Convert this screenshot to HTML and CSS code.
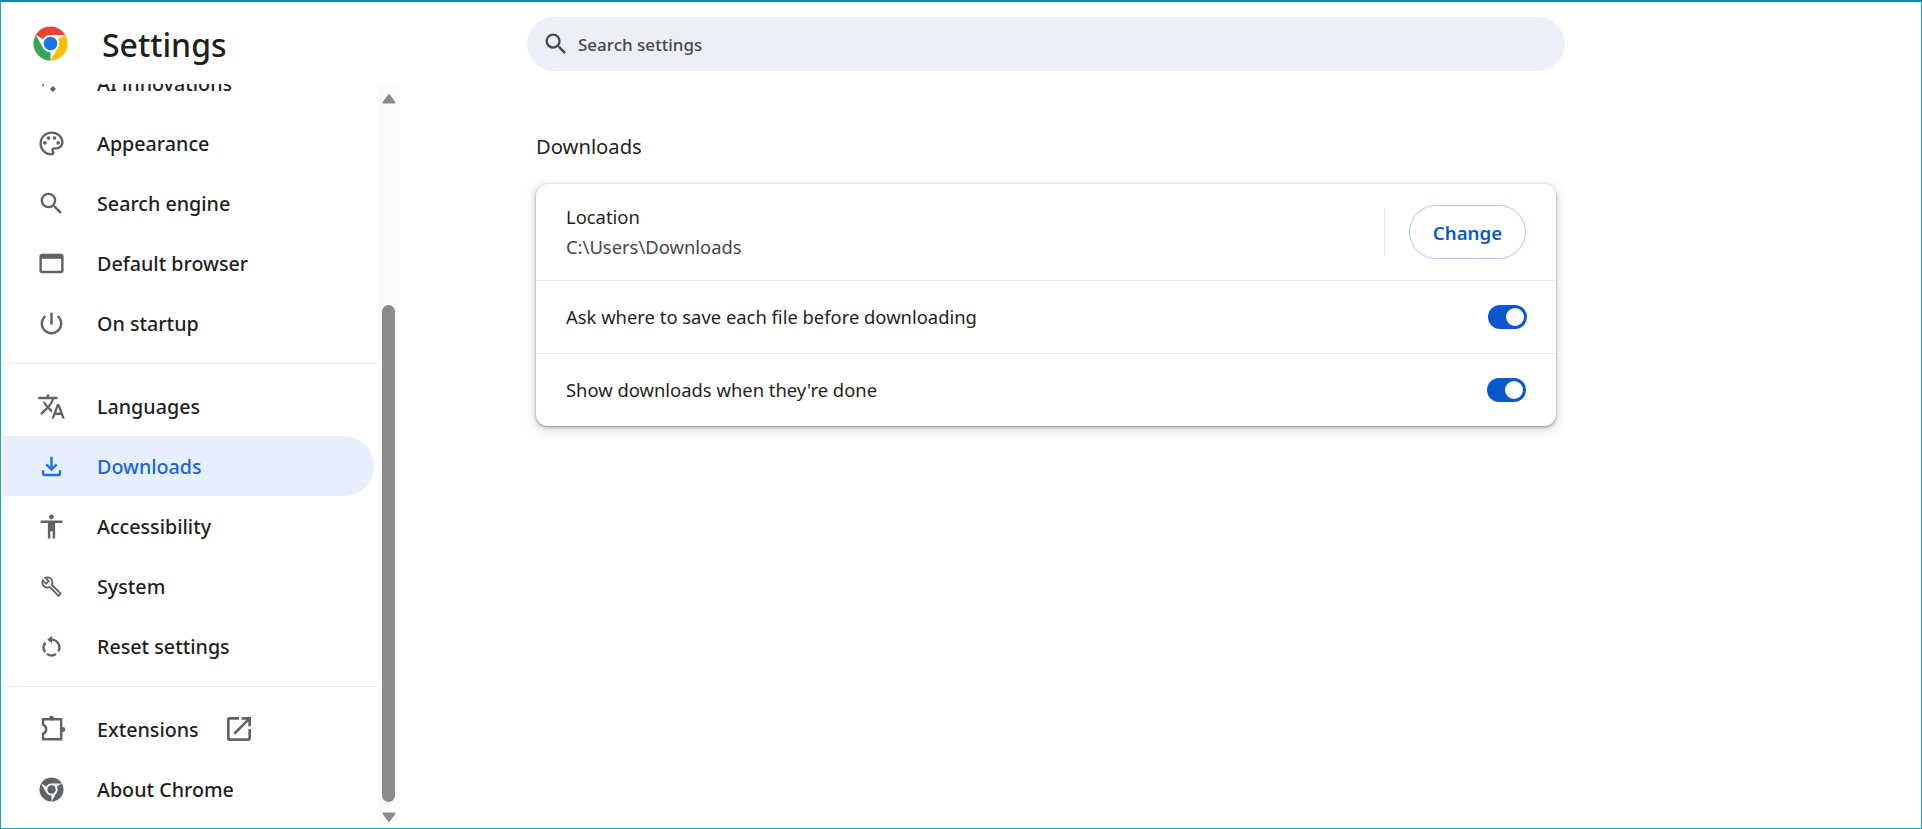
FILE: index.html
```html
<!DOCTYPE html>
<html lang="en">
<head>
<meta charset="UTF-8">
<meta name="viewport" content="width=device-width, initial-scale=1.0">
<title>Settings - Downloads</title>
<link rel="stylesheet" href="styles.css">
</head>
<body>
<div class="window">
  <aside class="sidebar">
    <div class="brand">
      <svg class="logo" viewBox="0 0 48 48">
        <path fill="#ea4335" d="M6.68 14A20 20 0 0 1 41.32 14H24A10 10 0 0 0 15.34 19Z"/>
        <path fill="#fbbc04" d="M41.32 14A20 20 0 0 1 24 44L32.66 29A10 10 0 0 0 32.66 19Z"/>
        <path fill="#34a853" d="M24 44A20 20 0 0 1 6.68 14L15.34 29A10 10 0 0 0 24 34Z"/>
        <circle fill="#fff" cx="24" cy="24" r="10"/>
        <circle fill="#1a73e8" cx="24" cy="24" r="8"/>
      </svg>
      <h1 class="brand-title">Settings</h1>
    </div>
    <div class="nav-area">
      <nav class="nav">
        <div class="nav-clip">
          <a class="nav-item">
            <svg class="icon" viewBox="0 0 24 24"><path d="M5 15.5L3.5 10H6.5ZM13.2 14L15.7 16.5L13.2 19L10.7 16.5Z"/></svg>
            AI innovations
          </a>
          <a class="nav-item">
            <svg class="icon" viewBox="0 0 24 24"><path d="M12 22C6.49 22 2 17.51 2 12S6.49 2 12 2s10 4.04 10 9c0 3.31-2.69 6-6 6h-1.77c-.28 0-.5.22-.5.5 0 .12.05.23.13.33.41.47.64 1.06.64 1.67 0 1.38-1.12 2.5-2.5 2.5zm0-18c-4.41 0-8 3.59-8 8s3.59 8 8 8c.28 0 .5-.22.5-.5 0-.16-.08-.28-.14-.35-.41-.46-.63-1.05-.63-1.65 0-1.38 1.12-2.5 2.5-2.5H16c2.21 0 4-1.79 4-4 0-3.86-3.59-7-8-7z"/><circle cx="6.5" cy="11.5" r="1.5"/><circle cx="9.5" cy="7.5" r="1.5"/><circle cx="14.5" cy="7.5" r="1.5"/><circle cx="17.5" cy="11.5" r="1.5"/></svg>
            Appearance
          </a>
          <a class="nav-item">
            <svg class="icon" viewBox="0 0 24 24"><path d="M15.5 14h-.79l-.28-.27A6.471 6.471 0 0 0 16 9.5 6.5 6.5 0 1 0 9.5 16c1.61 0 3.09-.59 4.23-1.57l.27.28v.79l5 4.99L20.49 19l-4.99-5zm-6 0C7.01 14 5 11.99 5 9.5S7.01 5 9.5 5 14 7.01 14 9.5 11.99 14 9.5 14z"/></svg>
            Search engine
          </a>
          <a class="nav-item">
            <svg class="icon" viewBox="0 0 24 24"><path d="M20 4H4c-1.1 0-2 .9-2 2v12c0 1.1.9 2 2 2h16c1.1 0 2-.9 2-2V6c0-1.1-.9-2-2-2zm0 14H4V8h16v10z"/></svg>
            Default browser
          </a>
          <a class="nav-item">
            <svg class="icon" viewBox="0 0 24 24"><path d="M13 3h-2v10h2V3zm4.83 2.17l-1.42 1.42C17.99 7.86 19 9.81 19 12c0 3.87-3.13 7-7 7s-7-3.13-7-7c0-2.19 1.01-4.14 2.58-5.42L6.17 5.17C4.23 6.82 3 9.26 3 12c0 4.97 4.03 9 9 9s9-4.03 9-9c0-2.74-1.23-5.18-3.17-6.83z"/></svg>
            On startup
          </a>
          <div class="nav-sep"></div>
          <a class="nav-item">
            <svg class="icon" viewBox="0 0 24 24"><path d="M12.87 15.07l-2.54-2.51.03-.03c1.74-1.94 2.98-4.17 3.71-6.53H17V4h-7V2H8v2H1v1.99h11.17C11.5 7.92 10.44 9.75 9 11.35 8.07 10.32 7.3 9.19 6.69 8h-2c.73 1.63 1.73 3.17 2.98 4.56l-5.09 5.02L4 19l5-5 3.11 3.11.76-2.04zM18.5 10h-2L12 22h2l1.12-3h4.75L21 22h2l-4.5-12zm-2.62 7l1.62-4.33L19.12 17h-3.24z"/></svg>
            Languages
          </a>
          <a class="nav-item active">
            <svg class="icon" viewBox="0 0 24 24"><path d="M12 16l-5-5 1.4-1.45L11 12.15V4h2v8.15l2.6-2.6L17 11l-5 5zm-6 4c-.55 0-1.02-.2-1.41-.59S4 18.55 4 18v-3h2v3h12v-3h2v3c0 .55-.2 1.02-.59 1.41S18.55 20 18 20H6z"/></svg>
            Downloads
          </a>
          <a class="nav-item">
            <svg class="icon" viewBox="0 0 24 24"><path d="M12 2c1.1 0 2 .9 2 2s-.9 2-2 2-2-.9-2-2 .9-2 2-2zm9 7h-6v13h-2v-6h-2v6H9V9H3V7h18v2z"/></svg>
            Accessibility
          </a>
          <a class="nav-item">
            <svg class="icon" viewBox="0 0 29 29"><g transform="translate(3.5 3.5) scale(.92)"><path d="M22.61 18.99l-9.08-9.08c.93-2.34.45-5.1-1.44-7C9.79.61 6.21.4 3.66 2.26L7.5 6.11 6.08 7.52 2.25 3.69C.39 6.23.6 9.82 2.9 12.11c1.86 1.86 4.57 2.35 6.89 1.48l9.11 9.11c.39.39 1.02.39 1.41 0l2.3-2.3c.4-.38.4-1.01 0-1.41zm-3 1.6l-9.46-9.46c-.61.45-1.29.72-2 .82-1.36.2-2.79-.21-3.83-1.25C3.37 9.76 2.93 8.5 3 7.26l3.09 3.09 4.24-4.24-3.09-3.09c1.24-.07 2.49.37 3.44 1.31 1.08 1.08 1.49 2.57 1.24 3.96-.12.71-.42 1.37-.88 1.96l9.45 9.45-.88.88z"/></g></svg>
            System
          </a>
          <a class="nav-item">
            <svg class="icon" viewBox="0 0 24 24"><path class="line" d="M12 6.3A6.5 6.5 0 0 1 17.63 16.05M15.73 18.12A6.5 6.5 0 0 1 8.27 18.12M6.68 16.53A6.5 6.5 0 0 1 7.02 8.62"/><path d="M8.5 6.3L12.5 3V9.6Z"/></svg>
            Reset settings
          </a>
          <div class="nav-sep"></div>
          <a class="nav-item">
            <svg class="icon" viewBox="0 0 24 24"><path class="line" d="M5 3.5H20V20H5V15.5A4 4 0 0 0 5 8Z"/><circle cx="12" cy="2.6" r="2"/><circle cx="21.4" cy="12" r="2"/></svg>
            Extensions
            <svg class="icon ext-link" viewBox="0 0 24 24"><path d="M19 19H5V5h7V3H5a2 2 0 0 0-2 2v14a2 2 0 0 0 2 2h14c1.1 0 2-.9 2-2v-7h-2v7zM14 3v2h3.59l-9.83 9.83 1.41 1.41L19 6.41V10h2V3h-7z"/></svg>
          </a>
          <a class="nav-item">
            <svg class="icon" viewBox="0 0 48 48"><path d="M6.68 14A20 20 0 0 1 41.32 14H24A10 10 0 0 0 15.34 19Z"/><path d="M41.32 14A20 20 0 0 1 24 44L32.66 29A10 10 0 0 0 32.66 19Z"/><path d="M24 44A20 20 0 0 1 6.68 14L15.34 29A10 10 0 0 0 24 34Z"/><circle cx="24" cy="24" r="7"/></svg>
            About Chrome
          </a>
        </div>
      </nav>
      <div class="scrollbar">
        <svg class="arrow" viewBox="0 0 14 11"><path d="M7 2L12.5 9.5H1.5Z"/></svg>
        <div class="thumb"></div>
        <svg class="arrow arrow-down" viewBox="0 0 14 11"><path d="M7 9L1.5 1.5H12.5Z"/></svg>
      </div>
    </div>
  </aside>

  <main class="main">
    <div class="search">
      <svg class="search-icon" viewBox="0 0 24 24"><path d="M15.5 14h-.79l-.28-.27A6.471 6.471 0 0 0 16 9.5 6.5 6.5 0 1 0 9.5 16c1.61 0 3.09-.59 4.23-1.57l.27.28v.79l5 4.99L20.49 19l-4.99-5zm-6 0C7.01 14 5 11.99 5 9.5S7.01 5 9.5 5 14 7.01 14 9.5 11.99 14 9.5 14z"/></svg>
      <span class="search-text">Search settings</span>
    </div>
    <h2 class="section-title">Downloads</h2>
    <section class="card">
      <div class="row row-location">
        <div class="location-text">
          <div class="row-label">Location</div>
          <div class="row-sub">C:\Users\Downloads</div>
        </div>
        <div class="vsep"></div>
        <button class="change-btn">Change</button>
      </div>
      <div class="row row-first">
        <div class="row-label">Ask where to save each file before downloading</div>
        <span class="toggle"></span>
      </div>
      <div class="row">
        <div class="row-label">Show downloads when they're done</div>
        <span class="toggle"></span>
      </div>
    </section>
  </main>
</div>
</body>
</html>
```

FILE: styles.css
```css
* {
  box-sizing: border-box;
}
body {
  margin: 0;
  background: #fff;
  color: #1f1f1f;
  font-family: "Noto Sans", "Open Sans", sans-serif;
}
.window {
  display: flex;
  height: 829px;
  overflow: hidden;
  border: 1px solid #1ba5b5;
  border-top: 2px solid #0e8a9c;
}

/* sidebar */
.sidebar {
  width: 399px;
  flex-shrink: 0;
  display: flex;
  flex-direction: column;
}
.brand {
  display: flex;
  align-items: center;
  height: 82px;
  padding: 0 0 0 29px;
}
.logo {
  width: 41px;
  height: 41px;
}
.brand-title {
  margin: 2px 0 0 31px;
  font-size: 32px;
  font-weight: 500;
  color: #1f1f1f;
}
.nav-area {
  flex: 1;
  display: flex;
  min-height: 0;
}
.nav {
  width: 376px;
  overflow: hidden;
}
.nav-clip {
  margin-top: -31px;
}
.nav-item {
  display: flex;
  align-items: center;
  height: 60px;
  width: 373px;
  padding-left: 36px;
  font-size: 19.7px;
  font-weight: 500;
  color: #1f1f1f;
  border-radius: 0 30px 30px 0;
}
.nav-item.active {
  margin-left: 2px;
  width: 371px;
  padding-left: 34px;
  background: #e7effc;
  color: #1a66d9;
}
.icon {
  width: 29px;
  height: 29px;
  margin-right: 31px;
  fill: #5f6368;
  flex-shrink: 0;
}
.nav-item.active .icon {
  fill: #1a73e8;
}
.ext-link {
  margin: 0 0 0 24px;
  width: 32px;
  height: 32px;
}
.line {
  fill: none;
  stroke: #5f6368;
  stroke-width: 2;
}
.nav-sep {
  height: 1px;
  margin: 10px 0 12px;
  background: #e8eaed;
}
.scrollbar {
  width: 23px;
  margin-top: 2px;
  background: #fbfbfb;
  display: flex;
  flex-direction: column;
  align-items: center;
}
.arrow {
  width: 14px;
  height: 11px;
  margin-top: 7px;
  flex-shrink: 0;
  fill: #8b8b8b;
  stroke: #8b8b8b;
  stroke-width: 2;
  stroke-linejoin: round;
}
.arrow-down {
  margin-top: 10px;
}
.thumb {
  width: 13px;
  height: 497px;
  margin-top: 201px;
  flex-shrink: 0;
  background: #8b8b8b;
  border-radius: 7px;
}

/* main */
.main {
  flex: 1;
  padding: 15px 0 0 127px;
}
.search {
  display: flex;
  align-items: center;
  width: 1038px;
  height: 54px;
  padding-left: 15px;
  background: #eceff7;
  border-radius: 27px;
}
.search-icon {
  width: 28px;
  height: 28px;
  fill: #474747;
}
.search-text {
  margin-left: 8px;
  font-size: 17px;
  font-weight: 500;
  color: #474747;
}
.section-title {
  margin: 61px 0 0 9px;
  height: 52px;
  font-size: 20.2px;
  font-weight: 400;
  line-height: 28px;
  color: #1f1f1f;
}
.card {
  width: 1020px;
  margin-left: 9px;
  border-radius: 12px;
  background: #fff;
  box-shadow: 0 1px 3px rgba(60, 64, 67, .5), 0 3px 8px 2px rgba(60, 64, 67, .18);
}
.row {
  display: flex;
  align-items: center;
  justify-content: space-between;
  height: 73px;
  padding: 0 30px;
  border-top: 1px solid #e9e9e9;
}
.row-location {
  height: 96px;
  border-top: 0;
  padding-right: 30px;
}
.row-first {
  padding-right: 29px;
}
.location-text {
  flex: 1;
}
.row-label {
  font-size: 18.4px;
  line-height: 24px;
}
.row-sub {
  margin-top: 6px;
  font-size: 18.4px;
  line-height: 24px;
  color: #474747;
}
.vsep {
  width: 1px;
  height: 48px;
  margin-right: 24px;
  background: #e9e9e9;
}
.change-btn {
  width: 117px;
  height: 54px;
  padding: 0;
  border: 1px solid #a8c7fa;
  border-radius: 27px;
  background: #fff;
  color: #0b57d0;
  font-family: inherit;
  font-size: 18.7px;
  font-weight: 600;
}
.toggle {
  display: flex;
  justify-content: flex-end;
  align-items: center;
  width: 39px;
  height: 24px;
  padding-right: 3px;
  border-radius: 12px;
  background: #0b57d0;
}
.toggle::after {
  content: "";
  width: 18px;
  height: 18px;
  border-radius: 50%;
  background: #fff;
}
```
